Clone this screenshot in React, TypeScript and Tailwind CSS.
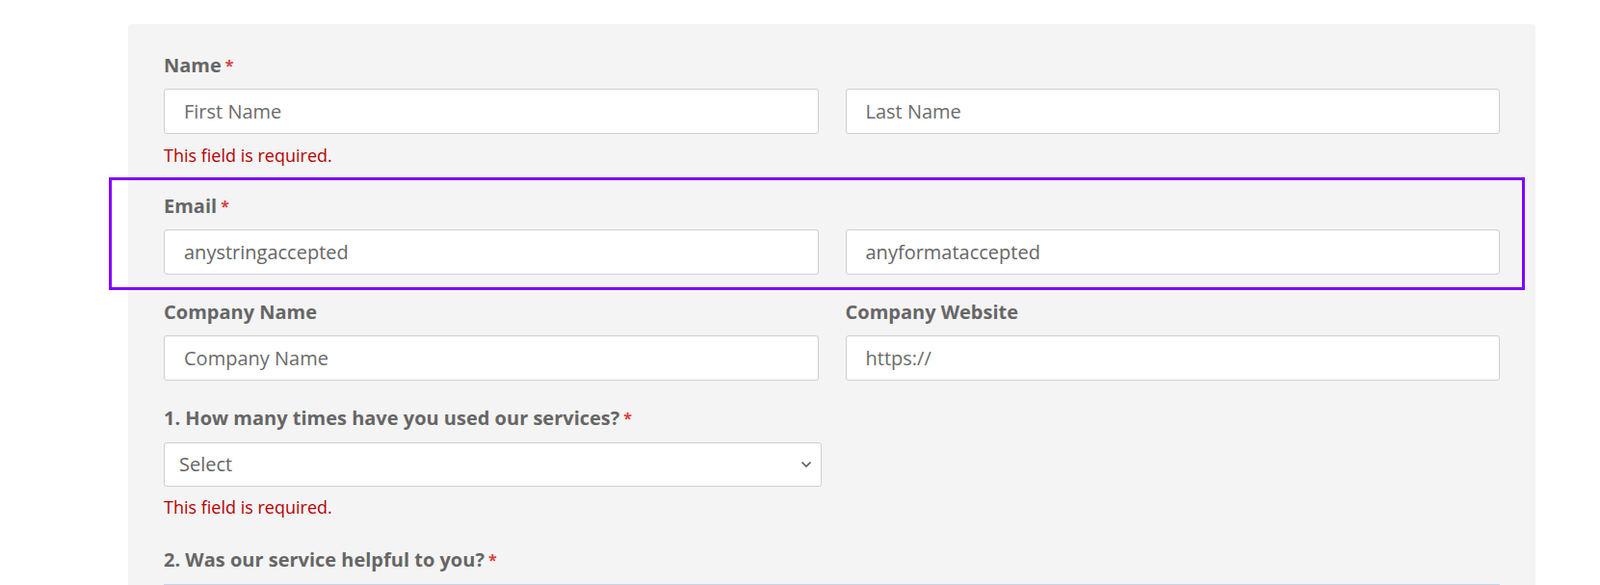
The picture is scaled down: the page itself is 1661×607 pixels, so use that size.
import React from "react";
import { ChevronDown } from "lucide-react";

const Label = ({ text, required }: { text: string; required?: boolean }) => (
  <div className="h-6 flex items-center text-[20px] font-bold text-[#666]">
    {text}
    {required && <span className="ml-1 text-[16px] text-[#e03c3c]">*</span>}
  </div>
);

const Input = ({ placeholder, value }: { placeholder?: string; value?: string }) => (
  <input
    readOnly
    placeholder={placeholder}
    defaultValue={value}
    className="w-full h-[47px] px-5 bg-white border border-[#cfcfcf] rounded-[3px] text-[20px] text-[#666] placeholder:text-[#6b6b6b] outline-none"
  />
);

const ErrorText = () => (
  <p className="h-[22px] leading-[22px] text-[18px] text-[#b40000]">This field is required.</p>
);

const App: React.FC = () => {
  const options = ["Never", "Once", "2-5 times", "6-10 times", "More than 10"];

  return (
    <div className="min-h-screen bg-white font-['Open_Sans',sans-serif] pt-[25px] pl-[133px]">
      <div className="w-[1461px] bg-[#f4f4f4] rounded-t-[4px] px-[37px] pt-[31px] pb-10">
        {/* Name */}
        <Label text="Name" required />
        <div className="grid grid-cols-2 gap-[28px] mt-3">
          <Input placeholder="First Name" />
          <Input placeholder="Last Name" />
        </div>
        <div className="mt-[11px]">
          <ErrorText />
        </div>

        {/* Email (highlighted) */}
        <div className="relative mt-[30px]">
          <div className="absolute -top-[18px] -bottom-[16px] -left-[57px] -right-[26px] border-[3px] border-[#7f00ff] pointer-events-none" />
          <Label text="Email" required />
          <div className="grid grid-cols-2 gap-[28px] mt-3">
            <Input value="anystringaccepted" />
            <Input value="anyformataccepted" />
          </div>
        </div>

        {/* Company */}
        <div className="grid grid-cols-2 gap-[28px] mt-[27px]">
          <div>
            <Label text="Company Name" />
            <div className="mt-3">
              <Input placeholder="Company Name" />
            </div>
          </div>
          <div>
            <Label text="Company Website" />
            <div className="mt-3">
              <Input placeholder="https://" />
            </div>
          </div>
        </div>

        {/* Q1 */}
        <div className="mt-[27px]">
          <Label text="1. How many times have you used our services?" required />
          <div className="relative w-[683px] mt-[13px]">
            <select className="appearance-none w-full h-[46px] pl-[15px] pr-10 bg-white border border-[#cfcfcf] rounded-[3px] text-[20px] text-[#666] outline-none">
              <option>Select</option>
              {options.map((o) => (
                <option key={o}>{o}</option>
              ))}
            </select>
            <ChevronDown
              size={16}
              strokeWidth={2.5}
              className="absolute right-[8px] top-[15px] text-[#555] pointer-events-none"
            />
          </div>
          <div className="mt-[10px]">
            <ErrorText />
          </div>
        </div>

        {/* Q2 */}
        <div className="mt-[32px]">
          <Label text="2. Was our service helpful to you?" required />
          <div className="grid grid-cols-5 mt-[13px] border border-[#c9d4e2] bg-[#e9f1fa]">
            {[0, 1, 2, 3, 4].map((i) => (
              <div
                key={i}
                className={`h-12 ${i > 0 ? "border-l border-[#c9d4e2]" : ""}`}
              />
            ))}
          </div>
        </div>
      </div>
    </div>
  );
};

export default App;
